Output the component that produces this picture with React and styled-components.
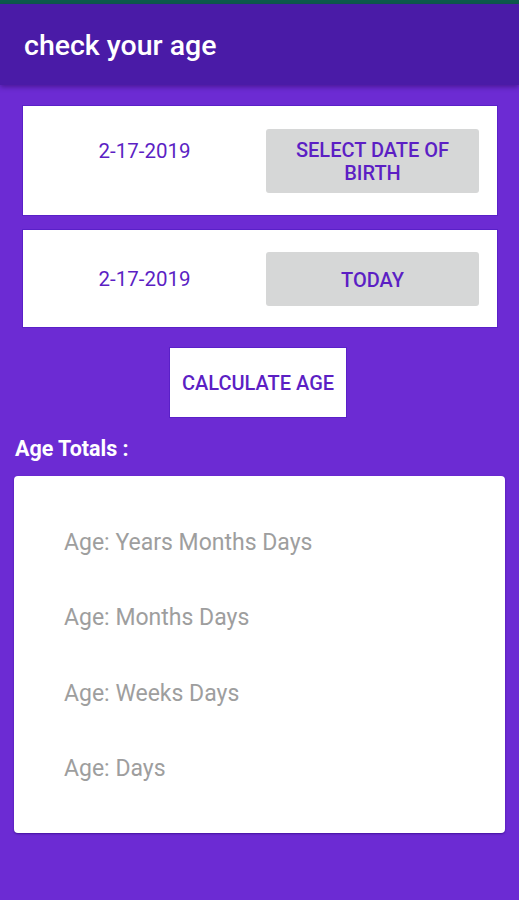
import React from 'react';
import styled, { createGlobalStyle } from 'styled-components';

const GlobalStyle = createGlobalStyle`
  html, body {
    margin: 0;
    padding: 0;
    background: #6c2bd3;
    font-family: Roboto, "Noto Sans", sans-serif;
  }
`;

const Screen = styled.div`
  width: 519px;
  min-height: 900px;
  background: #6c2bd3;
  display: flex;
  flex-direction: column;
`;

const StatusBar = styled.div`
  height: 4px;
  background: #0d5b4c;
`;

const AppBar = styled.header`
  height: 81px;
  background: #4a1ba7;
  display: flex;
  align-items: center;
  padding: 0 24px;
  box-shadow: 0 2px 5px rgba(30, 0, 80, 0.45);
  position: relative;
  z-index: 1;
`;

const Title = styled.h1`
  margin: 2px 0 0;
  color: #fff;
  font-size: 28.5px;
  font-weight: 500;
`;

const Content = styled.main`
  display: flex;
  flex-direction: column;
  padding: 20px 14px 0;
`;

const DateCard = styled.div`
  margin: 0 7px 13px 8px;
  height: ${(p) => p.$height}px;
  background: #fff;
  border: 1px solid #5a20c8;
  box-sizing: border-box;
  display: grid;
  grid-template-columns: 243px 213px;
  align-items: center;
`;

const DateText = styled.span`
  justify-self: center;
  color: #5c1fc4;
  font-size: 20.5px;
  margin-bottom: ${(p) => p.$lift}px;
`;

const GreyButton = styled.button`
  height: ${(p) => p.$height}px;
  background: #d6d7d7;
  border: none;
  border-radius: 3px;
  color: #5c1fc4;
  font-family: inherit;
  font-size: 20px;
  font-weight: 500;
  line-height: 23px;
  text-transform: uppercase;
  padding: 3px 16px 0;
`;

const CalcButton = styled.button`
  align-self: center;
  margin: 6px 0 0 -3px;
  width: 178px;
  height: 71px;
  flex-shrink: 0;
  background: #fff;
  border: 1px solid #5a20c8;
  color: #5c1fc4;
  font-family: inherit;
  font-size: 20px;
  font-weight: 500;
  text-transform: uppercase;
  padding: 1px 0 0;
`;

const SectionLabel = styled.h2`
  margin: 18px 0 15px 1px;
  color: #fff;
  font-size: 21.5px;
  font-weight: 700;
`;

const ResultCard = styled.section`
  height: 357px;
  width: 491px;
  flex-shrink: 0;
  background: #fff;
  border-radius: 4px;
  box-shadow: 0 1px 2px rgba(40, 0, 120, 0.6);
  box-sizing: border-box;
  padding: 54px 0 0 50px;
  display: flex;
  flex-direction: column;
  gap: 49.3px;
`;

const ResultLine = styled.div`
  color: #9e9e9e;
  font-size: 23px;
  line-height: 26px;
`;

const results = [
  'Age: Years Months Days',
  'Age: Months Days',
  'Age: Weeks Days',
  'Age: Days',
];

export default function App() {
  return (
    <Screen>
      <GlobalStyle />
      <StatusBar />
      <AppBar>
        <Title>check your age</Title>
      </AppBar>
      <Content>
        <DateCard $height={111}>
          <DateText $lift={20}>2-17-2019</DateText>
          <GreyButton $height={64}>Select date of birth</GreyButton>
        </DateCard>
        <DateCard $height={99}>
          <DateText $lift={0}>2-17-2019</DateText>
          <GreyButton $height={54}>Today</GreyButton>
        </DateCard>
        <CalcButton>Calculate age</CalcButton>
        <SectionLabel>Age Totals :</SectionLabel>
        <ResultCard>
          {results.map((r) => (
            <ResultLine key={r}>{r}</ResultLine>
          ))}
        </ResultCard>
      </Content>
    </Screen>
  );
}
